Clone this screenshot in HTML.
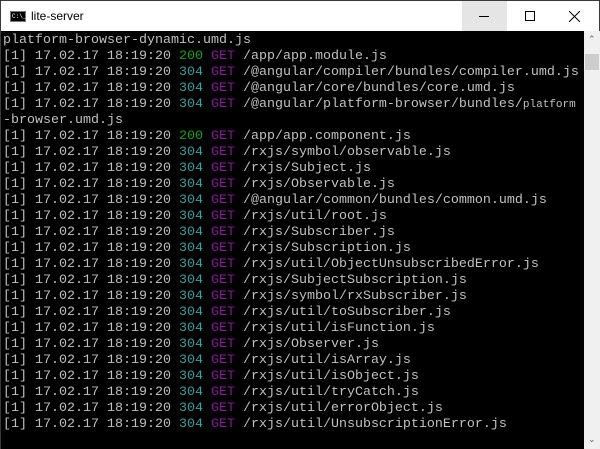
<!DOCTYPE html>
<html><head><meta charset="utf-8"><style>
*{margin:0;padding:0;box-sizing:border-box}
html,body{width:600px;height:449px;overflow:hidden;background:#fff}
.win{position:absolute;left:0;top:0;width:600px;height:449px;border:1px solid #3a3a3a;background:#fff}
.title{position:absolute;left:0;top:0;width:598px;height:30px;background:#fff;font-family:"Liberation Sans",sans-serif;font-size:12px;color:#000}
.title .t{position:absolute;left:30px;top:8px}
.ico{position:absolute;left:9px;top:10px;width:16px;height:11px;background:#000;border:1px solid #777}
.ico span{position:absolute;left:1px;top:0px;color:#fff;font-size:6px;font-family:"Liberation Mono",monospace;line-height:9px}
.btn{position:absolute;top:0;width:45px;height:30px}
.min{left:461px;background:#e5e5e5}
.min:after{content:"";position:absolute;left:17px;top:15px;width:10px;height:1px;background:#000}
.max{left:506px}
.max:after{content:"";position:absolute;left:18px;top:10px;width:10px;height:10px;border:1px solid #000;box-sizing:border-box}
.cls{left:551px}
.cls svg{position:absolute;left:17px;top:10px}
.con{position:absolute;left:0;top:30px;width:583px;height:418px;background:#000;overflow:hidden}
pre{position:absolute;left:2px;top:2px;font-family:"Liberation Mono",monospace;font-size:13.33px;line-height:16px;color:#c0c0c0;white-space:pre}
.g{color:#13a10e}.c{color:#3a9f9f}.p{color:#881798}
.sm{font-size:11px}
.sb{position:absolute;left:583px;top:30px;width:16px;height:418px;background:#f0f0f0}
.thumb{position:absolute;left:1px;top:23px;width:14px;height:16px;background:#cdcdcd}
.sb .u,.sb .d{position:absolute;left:4px;font-size:9px;color:#606060;font-family:"DejaVu Sans",sans-serif}
</style></head><body>
<div class="win">
<div class="title"><div class="ico"><span>C:\_</span></div><div class="t">lite-server</div>
<div class="btn min"></div><div class="btn max"></div>
<div class="btn cls"><svg width="11" height="11"><path d="M0 0L11 11M11 0L0 11" stroke="#000" stroke-width="1"/></svg></div></div>
<div class="con"><pre>platform-browser-dynamic.umd.js
[1] 17.02.17 18:19:20 <span class="g">200</span> <span class="p">GET</span> /app/app.module.js
[1] 17.02.17 18:19:20 <span class="c">304</span> <span class="p">GET</span> /@angular/compiler/bundles/compiler.umd.js
[1] 17.02.17 18:19:20 <span class="c">304</span> <span class="p">GET</span> /@angular/core/bundles/core.umd.js
[1] 17.02.17 18:19:20 <span class="c">304</span> <span class="p">GET</span> /@angular/platform-browser/bundles/<span class="sm">platform</span>
-browser.umd.js
[1] 17.02.17 18:19:20 <span class="g">200</span> <span class="p">GET</span> /app/app.component.js
[1] 17.02.17 18:19:20 <span class="c">304</span> <span class="p">GET</span> /rxjs/symbol/observable.js
[1] 17.02.17 18:19:20 <span class="c">304</span> <span class="p">GET</span> /rxjs/Subject.js
[1] 17.02.17 18:19:20 <span class="c">304</span> <span class="p">GET</span> /rxjs/Observable.js
[1] 17.02.17 18:19:20 <span class="c">304</span> <span class="p">GET</span> /@angular/common/bundles/common.umd.js
[1] 17.02.17 18:19:20 <span class="c">304</span> <span class="p">GET</span> /rxjs/util/root.js
[1] 17.02.17 18:19:20 <span class="c">304</span> <span class="p">GET</span> /rxjs/Subscriber.js
[1] 17.02.17 18:19:20 <span class="c">304</span> <span class="p">GET</span> /rxjs/Subscription.js
[1] 17.02.17 18:19:20 <span class="c">304</span> <span class="p">GET</span> /rxjs/util/ObjectUnsubscribedError.js
[1] 17.02.17 18:19:20 <span class="c">304</span> <span class="p">GET</span> /rxjs/SubjectSubscription.js
[1] 17.02.17 18:19:20 <span class="c">304</span> <span class="p">GET</span> /rxjs/symbol/rxSubscriber.js
[1] 17.02.17 18:19:20 <span class="c">304</span> <span class="p">GET</span> /rxjs/util/toSubscriber.js
[1] 17.02.17 18:19:20 <span class="c">304</span> <span class="p">GET</span> /rxjs/util/isFunction.js
[1] 17.02.17 18:19:20 <span class="c">304</span> <span class="p">GET</span> /rxjs/Observer.js
[1] 17.02.17 18:19:20 <span class="c">304</span> <span class="p">GET</span> /rxjs/util/isArray.js
[1] 17.02.17 18:19:20 <span class="c">304</span> <span class="p">GET</span> /rxjs/util/isObject.js
[1] 17.02.17 18:19:20 <span class="c">304</span> <span class="p">GET</span> /rxjs/util/tryCatch.js
[1] 17.02.17 18:19:20 <span class="c">304</span> <span class="p">GET</span> /rxjs/util/errorObject.js
[1] 17.02.17 18:19:20 <span class="c">304</span> <span class="p">GET</span> /rxjs/util/UnsubscriptionError.js</pre></div>
<div class="sb"><div class="u" style="top:4px">&#8963;</div><div class="thumb"></div><div class="d" style="bottom:4px">&#8964;</div></div>
</div>
</body></html>
